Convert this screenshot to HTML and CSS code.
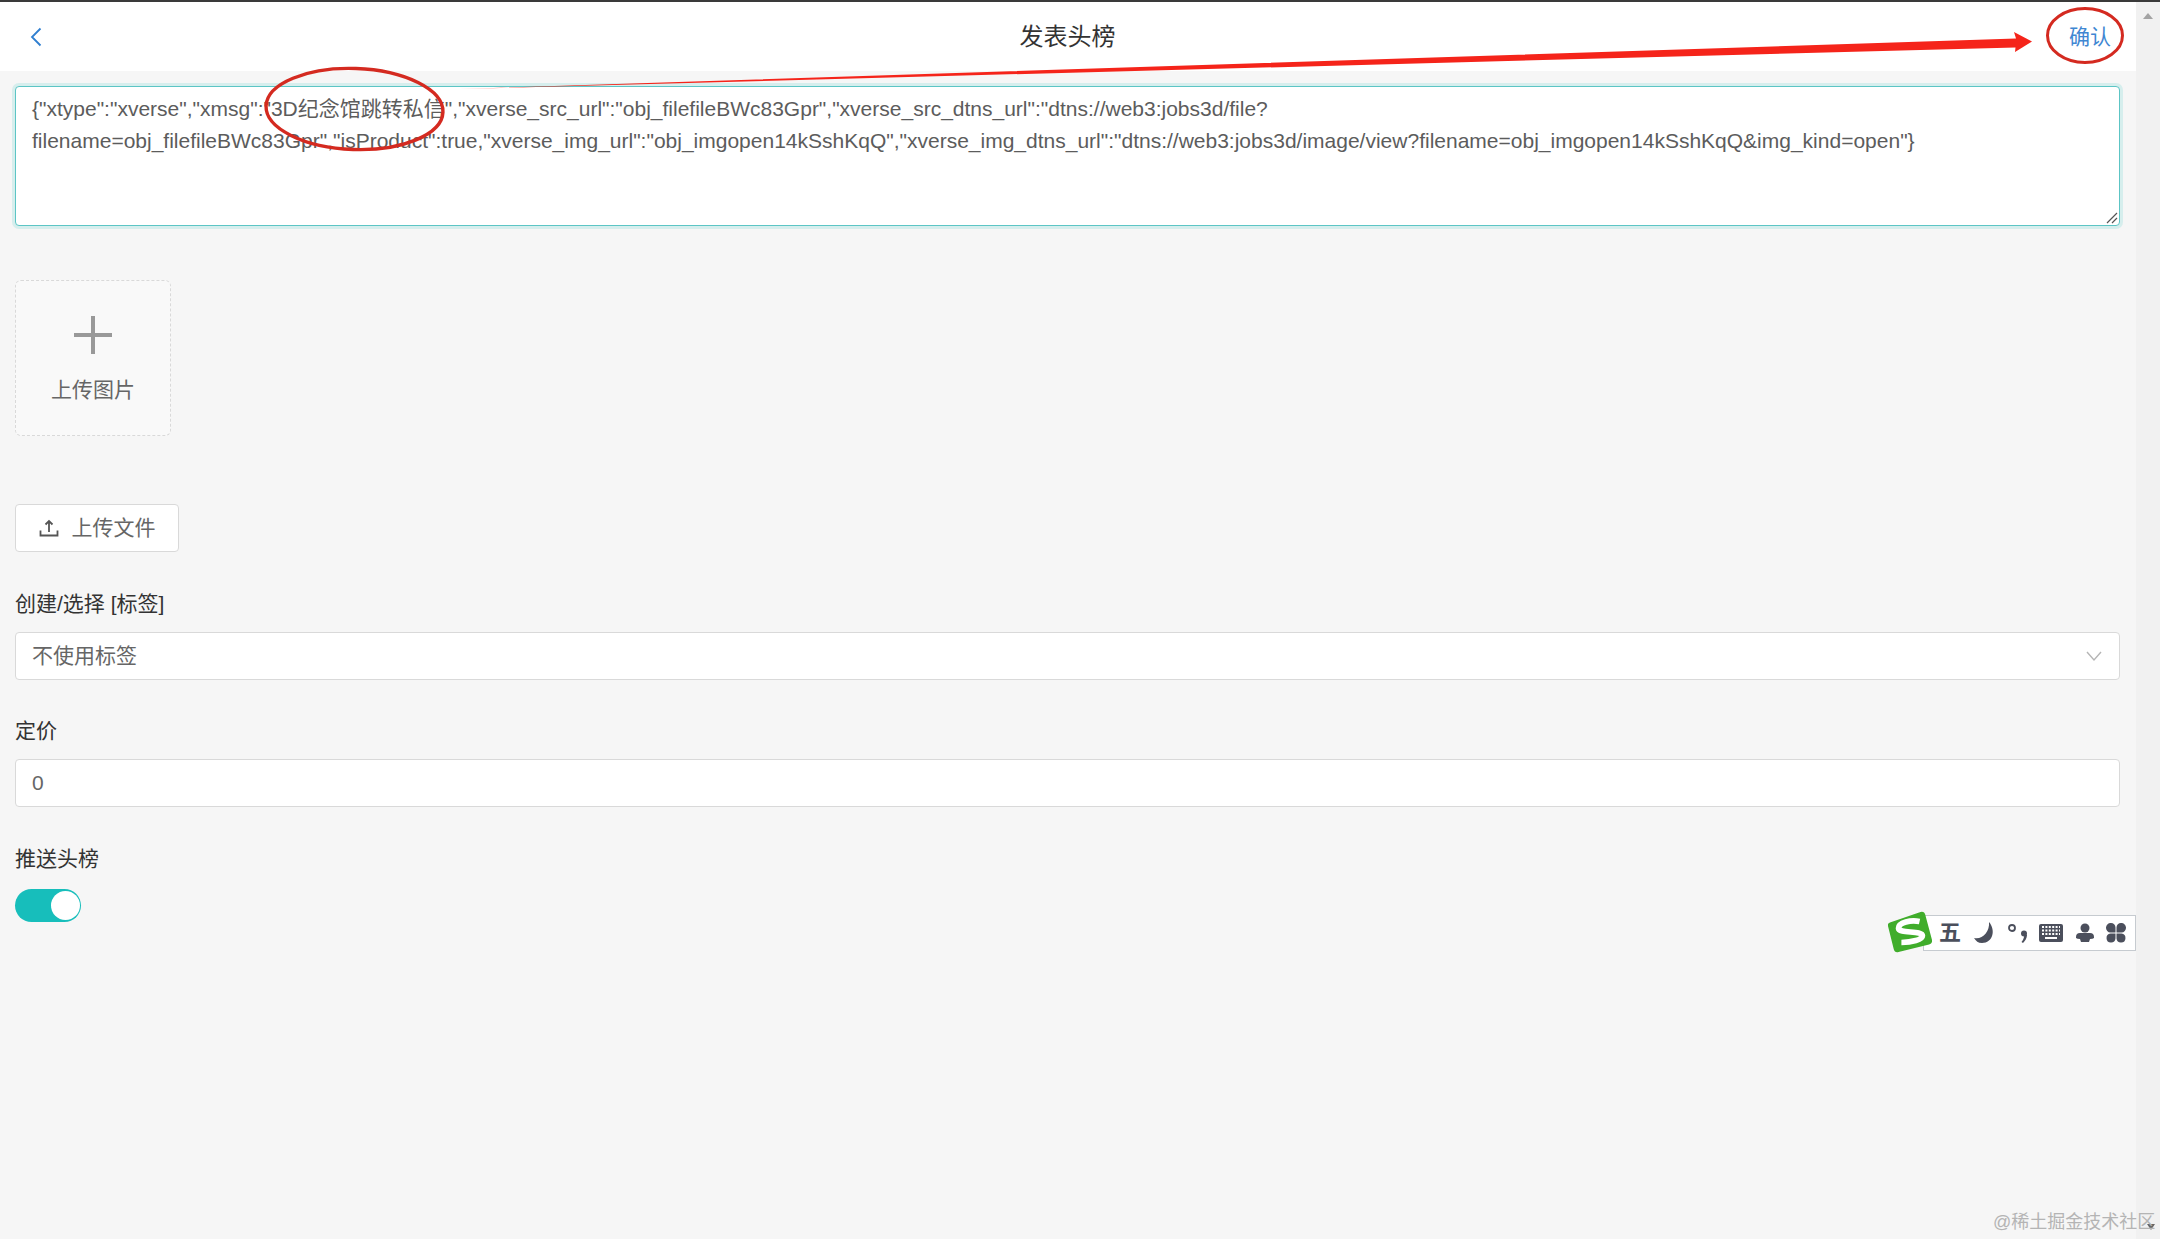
FILE: index.html
```html
<!DOCTYPE html>
<html lang="zh-CN">
<head>
<meta charset="utf-8">
<title>发表头榜</title>
<link rel="stylesheet" href="styles.css">
</head>
<body>
<div class="topline"></div>
<div class="app">
  <main class="main">
    <header class="header">
      <a class="back" aria-label="back"><svg width="12" height="20" viewBox="0 0 12 20"><path d="M10.5 1.5 2 10l8.500 8.500" fill="none" stroke="#2f7fd0" stroke-width="1.800"/></svg></a>
      <h1 class="title">发表头榜</h1>
      <a class="confirm">确认</a>
    </header>
    <form class="form">
      <div class="textarea">{"xtype":"xverse","xmsg":"3D纪念馆跳转私信","xverse_src_url":"obj_filefileBWc83Gpr","xverse_src_dtns_url":"dtns://web3:jobs3d/file?<br>filename=obj_filefileBWc83Gpr","isProduct":true,"xverse_img_url":"obj_imgopen14kSshKqQ","xverse_img_dtns_url":"dtns://web3:jobs3d/image/view?filename=obj_imgopen14kSshKqQ&amp;img_kind=open"}
        <svg class="grip" width="12" height="12" viewBox="0 0 12 12"><path d="M1 11 11 1M6 11l5-5" stroke="#555" stroke-width="1.200" fill="none"/></svg>
      </div>
      <div class="upload-card">
        <span class="plus"></span>
        <span class="upload-text">上传图片</span>
      </div>
      <button type="button" class="upload-btn">
        <svg width="20" height="18" viewBox="0 0 20 18"><path d="M10 13V2M6.500 5.500 10 2l3.500 3.500M1.500 11.500v5h17v-5" fill="none" stroke="#555" stroke-width="1.800"/></svg>
        <span>上传文件</span>
      </button>
      <label class="label">创建/选择 [标签]</label>
      <div class="field select">
        <span>不使用标签</span>
        <svg width="16" height="11" viewBox="0 0 16 11"><path d="M1 1l7 8 7-8" fill="none" stroke="#b5b5b5" stroke-width="1.400"/></svg>
      </div>
      <label class="label label-price">定价</label>
      <div class="field"><span>0</span></div>
      <label class="label">推送头榜</label>
      <div class="switch"><span class="knob"></span></div>
    </form>
  </main>
  <aside class="scrollbar">
    <span class="arrow-up"></span>
    <span class="arrow-down"></span>
  </aside>
</div>

<svg class="annotations" width="2160" height="1239" viewBox="0 0 2160 1239">
  <ellipse cx="354.500" cy="109" rx="88.500" ry="40.500" fill="none" stroke="#d42a20" stroke-width="3.400" transform="rotate(2 354 109)"/>
  <ellipse cx="2085" cy="35.500" rx="37.500" ry="27" fill="none" stroke="#d42a20" stroke-width="3"/>
  <path d="M460 89 2016 38.500 2014 32 2032 41.500 2015 52 2015.500 47.500Z" fill="#f5241a"/>
</svg>

<div class="ime">
  <svg class="ime-logo" width="44" height="42" viewBox="0 0 46 44">
    <path d="M1 12 33 1q4-1 5 3l7 26q1 4-3 5L10 43q-4 1-5-3L-1 16q-1-3 2-4Z" fill="#40ad2b" transform="translate(1 0)"/>
    <path d="M33 11C24 9 11 12 11 18c0 6 25 2 25 8 0 4-11 7-22 7" fill="none" stroke="#fff" stroke-width="6"/>
  </svg>
  <span class="ime-char">五</span>
  <svg class="ime-moon" width="22" height="22" viewBox="0 0 22 22"><path d="M15 0c7 8 4 21-7 21-4 0-6-2-8-5 8 2 16-6 15-16Z" fill="#4b4f5c"/></svg>
  <svg width="20" height="22" viewBox="0 0 20 22"><circle cx="4" cy="6" r="3" fill="none" stroke="#4b4f5c" stroke-width="1.800"/><circle cx="16" cy="11.500" r="3" fill="#4b4f5c"/><path d="M16.500 12 19 13c0 3-2 6-4 8l-1.500-1c1-1 2-3 2.500-5Z" fill="#4b4f5c"/></svg>
  <svg width="24" height="18" viewBox="0 0 24 18"><rect width="24" height="18" rx="2" fill="#4b4f5c"/><path d="M3 3h18M3 6.500h18M3 10h18" stroke="#fff" stroke-width="1.800" stroke-dasharray="2 1.400"/><path d="M6 14h12" stroke="#fff" stroke-width="2"/></svg>
  <svg width="20" height="20" viewBox="0 0 20 20"><circle cx="10" cy="5" r="4.500" fill="#4b4f5c"/><path d="M1 14q0-4 4-4h10q4 0 4 4v1q-1 1-4 1l-1 3H6l-1-3q-3 0-4-1Z" fill="#4b4f5c"/></svg>
  <svg width="20" height="20" viewBox="0 0 20 20"><g fill="#4b4f5c"><path d="M5 0a4.500 4.500 0 0 1 4.500 4.500v5h-5a4.500 4.500 0 0 1 .5-9.500Z"/><path d="M15 0a4.500 4.500 0 0 1 .5 9.500h-5v-5A4.500 4.500 0 0 1 15 0Z"/><path d="M4.500 10.500h5v5a4.500 4.500 0 1 1-5-5Z"/><path d="M10.500 10.500h5a4.500 4.500 0 1 1-5 5Z"/></g></svg>
</div>

<div class="watermark">@稀土掘金技术社区</div>
</body>
</html>
```

FILE: styles.css
```css
* { box-sizing: border-box; }
html, body { margin: 0; height: 100%; overflow: hidden; }
body {
  position: relative;
  display: flex;
  flex-direction: column;
  background: #f6f6f6;
  color: #333;
  font: 21px/32px "Liberation Sans", "Noto Sans CJK SC", sans-serif;
}
.topline { height: 2px; background: #3a3a3a; flex: none; }
.app { flex: 1; display: flex; min-height: 0; }
.main { flex: 1; min-width: 0; }
.scrollbar {
  width: 24px;
  flex: none;
  background: #f1f1f1;
  display: flex;
  flex-direction: column;
  justify-content: space-between;
  align-items: center;
  padding: 11px 0 9px;
}
.arrow-up { border: 5px solid transparent; border-top: 0; border-bottom: 6px solid #a3a3a3; }
.arrow-down { border: 4px solid transparent; border-bottom: 0; border-top: 6px solid #666; margin-left: 6px; }

.header {
  height: 69px;
  background: #fff;
  display: flex;
  align-items: center;
  justify-content: space-between;
  padding: 0 25px 0 30px;
  position: relative;
}
.back { display: flex; }
.title {
  margin: 0;
  font-size: 24px;
  font-weight: 400;
  color: #333;
  position: absolute;
  left: -1px;
  right: 0;
  text-align: center;
  pointer-events: none;
}
.confirm { color: #3f87d2; }

.form { padding: 15px 16px 0 15px; }
.textarea {
  position: relative;
  height: 140px;
  padding: 6px 16px;
  background: #fff;
  border: 1px solid #5cc5c5;
  border-radius: 4px;
  box-shadow: 0 0 0 3px rgba(23, 190, 187, .14);
  color: #5c5c5c;
  white-space: nowrap;
}
.grip { position: absolute; right: 1px; bottom: 1px; }
.upload-card {
  margin-top: 54px;
  width: 156px;
  height: 156px;
  background: #f9f9f9;
  border: 1px dashed #d9d9d9;
  border-radius: 6px;
  display: flex;
  flex-direction: column;
  align-items: center;
  padding-top: 35px;
  color: #666;
}
.plus {
  width: 38px;
  height: 38px;
  background:
    linear-gradient(#999, #999) center / 38px 4px no-repeat,
    linear-gradient(#999, #999) center / 4px 38px no-repeat;
}
.upload-text { margin-top: 20px; }
.upload-btn {
  margin-top: 68px;
  width: 164px;
  height: 48px;
  display: flex;
  align-items: center;
  justify-content: center;
  gap: 13px;
  background: #fff;
  border: 1px solid #d9d9d9;
  border-radius: 4px;
  color: #666;
  font: inherit;
  padding: 0;
}
.label { display: block; margin: 36px 0 12px; color: #333; }
.label-price { margin-top: 35px; }
.field {
  height: 48px;
  background: #fff;
  border: 1px solid #d9d9d9;
  border-radius: 4px;
  padding: 0 16px;
  display: flex;
  align-items: center;
  justify-content: space-between;
  color: #666;
}
.select { padding-right: 17px; }
.switch {
  margin-top: 14px;
  width: 66px;
  height: 33px;
  border-radius: 17px;
  background: #17bebb;
  position: relative;
}
.knob {
  position: absolute;
  right: 1px;
  top: 2px;
  width: 29px;
  height: 29px;
  border-radius: 50%;
  background: #fff;
}

.annotations { position: absolute; left: 0; top: 0; pointer-events: none; }

.ime {
  position: absolute;
  left: 1923px;
  top: 915px;
  width: 213px;
  height: 36px;
  background: #fff;
  border: 1.500px solid #c6cbd0;
  display: flex;
  align-items: center;
  justify-content: space-between;
  padding: 0 9px 0 15px;
}
.ime-logo { position: absolute; left: -36px; top: -5px; }
.ime-moon { margin-left: 2px; }
.ime-char { font-size: 22px; font-weight: 700; color: #4b4f5c; line-height: 1; }

.watermark {
  position: absolute;
  left: 1993px;
  top: 1211px;
  font-size: 18px;
  line-height: 22px;
  color: #b4b4b4;
  white-space: nowrap;
}
```
